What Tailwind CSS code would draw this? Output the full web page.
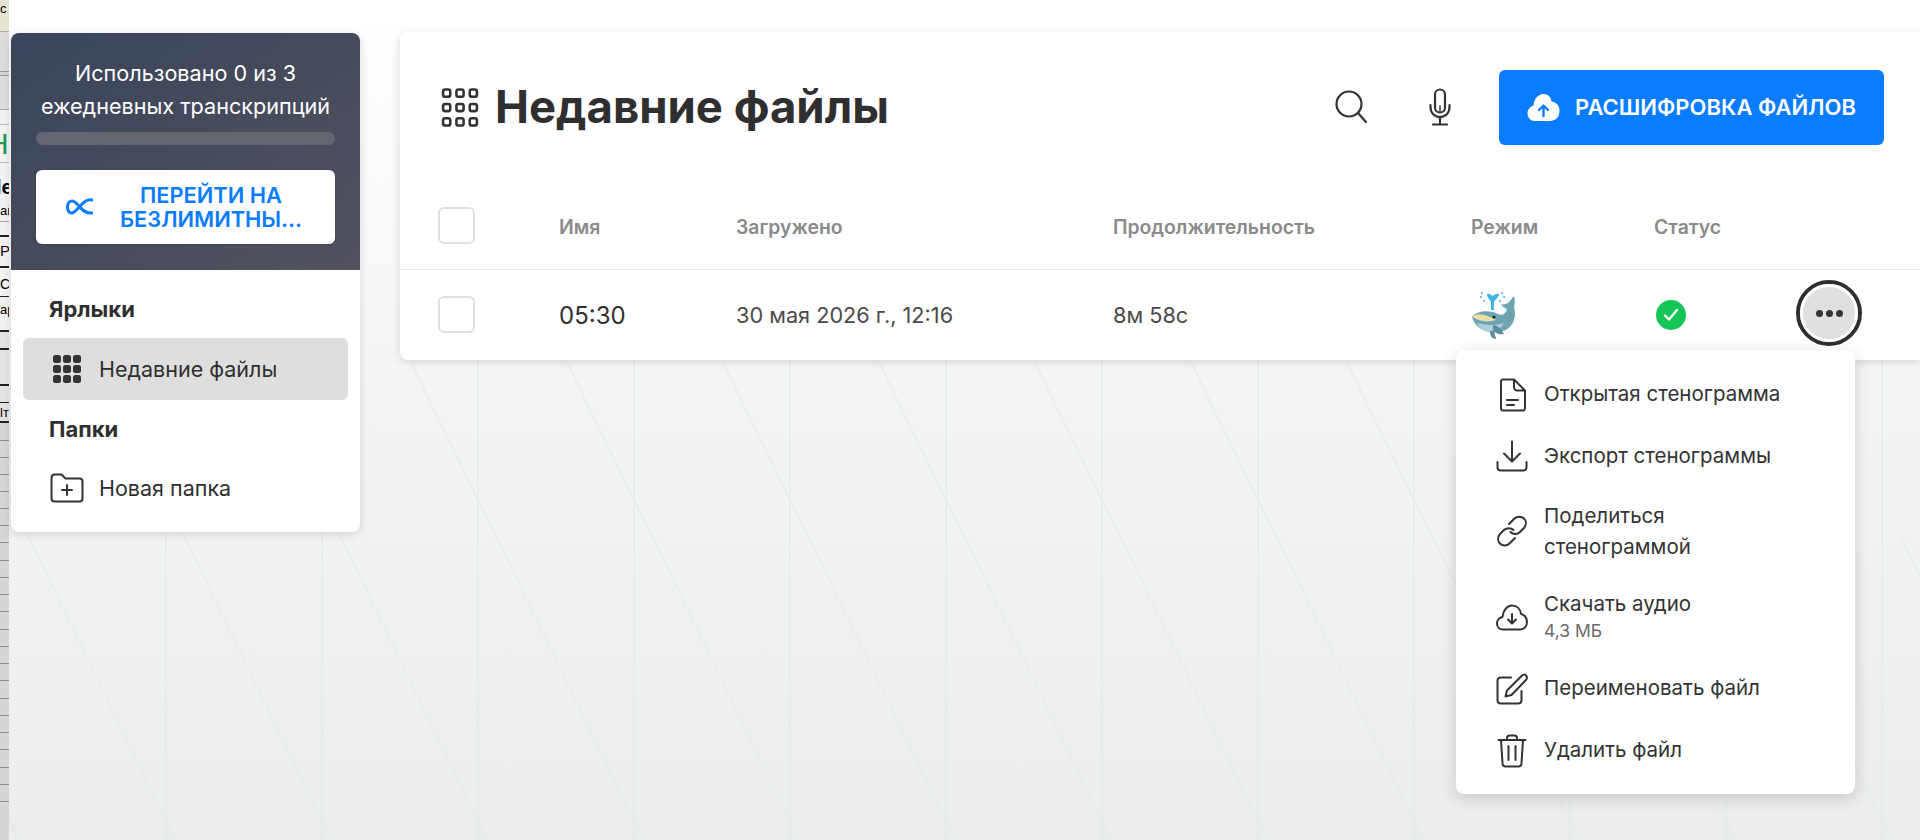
<!DOCTYPE html>
<html lang="ru">
<head>
<meta charset="utf-8">
<title>Недавние файлы</title>
<script src="https://cdn.jsdelivr.net/npm/@tailwindcss/browser@4"></script>
</head>
<body class="w-[1920px] h-[840px] overflow-hidden font-['Inter',sans-serif] text-[#2f2f2f]">
<div class="relative flex w-[1920px] h-[840px] overflow-hidden bg-gradient-to-b from-white via-[#f3f4f4] via-50% to-[#ebecec]">

    <!-- faint background pattern -->
    <svg class="absolute inset-0" width="1920" height="840" fill="none">
        <g stroke="#dfe6ee" stroke-width="1">
            <path d="M166 300V840M322 300V840M478 300V840M634 300V840M790 300V840M946 300V840M1102 300V840M1258 300V840M1414 300V840M1570 300V840M1726 300V840M1882 300V840"/>
        </g>
        <g stroke="#e3e8eb" stroke-width="1">
            <path d="M-126 540L24 850M30 540L180 850M186 540L336 850M342 540L492 850M498 540L648 850M654 540L804 850M810 540L960 850M966 540L1116 850M1122 540L1272 850M1278 540L1428 850M1434 540L1584 850M1590 540L1740 850M1746 540L1896 850M1902 540L2052 850"/>
            <path d="M30 540L-30 420M186 540L100 365M342 540L256 365M498 540L412 365M654 540L568 365M810 540L724 365M966 540L880 365M1122 540L1036 365M1278 540L1192 365M1434 540L1348 365"/>
        </g>
    </svg>

    <!-- other window peeking in on the left edge -->
    <div class="relative flex flex-col w-[9px] shrink-0 overflow-hidden bg-[#d6d6d6] text-black font-['Liberation_Sans',sans-serif]">
        <div class="h-[32px] shrink-0 bg-[#e6e3d2] border-b border-[#aaa] text-[13px] leading-[18px] -tracking-[1px]">c</div>
        <div class="h-[40px] shrink-0 bg-[#dcdcdc] border-b border-[#999]"></div>
        <div class="h-[4px] shrink-0 border-b border-[#999]"></div>
        <div class="h-[34px] shrink-0 bg-[#dcdcdc] border-b border-[#aaa]"></div>
        <div class="h-[15px] shrink-0 bg-[#f2f2f2] border-b border-[#bbb]"></div>
        <div class="h-[38px] shrink-0 bg-[#f2f2f2] border-b border-[#bbb] text-[#1d9a4e] text-[30px] leading-[38px] -ml-[13px]">H</div>
        <div class="h-[37px] shrink-0 bg-[#f2f2f2] text-[20px] font-bold leading-[48px] -ml-[4px]">le</div>
        <div class="h-[22px] shrink-0 bg-[#f2f2f2] border-b border-[#aaa] text-[13px] leading-[22px]">ай</div>
        <div class="h-[15px] shrink-0 bg-[#f2f2f2] border-b-2 border-[#222]"></div>
        <div class="h-[31px] shrink-0 bg-[#f2f2f2] border-b-2 border-[#222] text-[15px] leading-[28px]">Рр</div>
        <div class="h-[29px] shrink-0 bg-[#f2f2f2] border-b border-[#222] text-[14px] leading-[32px]">Со</div>
        <div class="h-[35px] shrink-0 bg-[#f2f2f2] border-b-2 border-[#222] text-[13px] leading-[26px]">ар</div>
        <div class="h-[18px] shrink-0 bg-[#e4e4e4] border-b-2 border-[#222]"></div>
        <div class="h-[36px] shrink-0 bg-[#e4e4e4] border-b-2 border-[#222]"></div>
        <div class="h-[17px] shrink-0 bg-[#e4e4e4] border-b border-[#222]"></div>
        <div class="h-[20px] shrink-0 bg-[#e4e4e4] border-b-2 border-[#222] text-[13px] leading-[20px]">lт</div>
        <div class="h-[18px] shrink-0 border-b border-[#8f8f8f]"></div>
        <div class="h-[17px] shrink-0 border-b border-[#8f8f8f]"></div>
        <div class="h-[17px] shrink-0 border-b border-[#8f8f8f]"></div>
        <div class="h-[17px] shrink-0 border-b border-[#8f8f8f]"></div>
        <div class="h-[17px] shrink-0 border-b border-[#8f8f8f]"></div>
        <div class="h-[17px] shrink-0 border-b border-[#8f8f8f]"></div>
        <div class="h-[17px] shrink-0 border-b border-[#8f8f8f]"></div>
        <div class="h-[18px] shrink-0 border-b border-[#8f8f8f]"></div>
        <div class="h-[17px] shrink-0 border-b border-[#8f8f8f]"></div>
        <div class="h-[17px] shrink-0 border-b border-[#8f8f8f]"></div>
        <div class="h-[17px] shrink-0 border-b border-[#8f8f8f]"></div>
        <div class="h-[18px] shrink-0 border-b border-[#8f8f8f]"></div>
        <div class="h-[17px] shrink-0 border-b border-[#8f8f8f]"></div>
        <div class="h-[17px] shrink-0 border-b border-[#8f8f8f]"></div>
        <div class="h-[17px] shrink-0 border-b border-[#8f8f8f]"></div>
        <div class="h-[18px] shrink-0 border-b border-[#8f8f8f]"></div>
        <div class="h-[17px] shrink-0 border-b border-[#8f8f8f]"></div>
        <div class="h-[17px] shrink-0 border-b border-[#8f8f8f]"></div>
        <div class="h-[17px] shrink-0 border-b border-[#8f8f8f]"></div>
        <div class="h-[18px] shrink-0 border-b border-[#8f8f8f]"></div>
        <div class="h-[17px] shrink-0 border-b border-[#8f8f8f]"></div>
        <div class="h-[17px] shrink-0 border-b border-[#8f8f8f]"></div>
    </div>

    <!-- sidebar -->
    <aside class="relative w-[349px] h-[499px] mt-[33px] ml-[2px] shrink-0 bg-white rounded-lg shadow-[0_2px_10px_rgba(0,0,0,0.14)] overflow-hidden">
        <div class="h-[237px] px-[25px] pt-[24px] bg-gradient-to-br from-[#39445a] to-[#52525e] text-white">
            <p class="text-center text-[21.600px] leading-[33px]">Использовано 0 из 3 ежедневных транскрипций</p>
            <div class="h-[13px] mt-[9px] rounded-full bg-[#63666f]"></div>
            <button class="flex items-center w-full h-[74px] mt-[25px] pl-[30px] pr-[6px] rounded-md bg-white text-[#0a7cff] shadow-sm">
                <svg class="shrink-0" width="27" height="18" viewBox="0 0 27 18" fill="none" stroke="currentColor" stroke-width="3" stroke-linecap="round"><path d="M26 2C21 1 18 4 14 8 10 13 7 15.500 5 15 2 14 1.500 11 1.500 9 1.500 6 3 3 6 3 9 3 11 6 14 9 17 13 20 15.500 26 15"/></svg>
                <span class="flex-1 text-center text-[21.800px] leading-[24px] font-semibold">ПЕРЕЙТИ НА<br>БЕЗЛИМИТНЫ...</span>
            </button>
        </div>
        <div class="px-[12px]">
            <h3 class="h-[68px] pl-[26px] pt-[24px] text-[22px] leading-[30px] font-bold">Ярлыки</h3>
            <a class="flex items-center h-[62px] pl-[30px] gap-[18px] rounded-md bg-[#dedede] text-[21.500px]">
                <svg width="28" height="28" viewBox="0 0 28 28" fill="#333"><rect x="0" y="0" width="8" height="8" rx="2.500"/><rect x="10" y="0" width="8" height="8" rx="2.500"/><rect x="20" y="0" width="8" height="8" rx="2.500"/><rect x="0" y="10" width="8" height="8" rx="2.500"/><rect x="10" y="10" width="8" height="8" rx="2.500"/><rect x="20" y="10" width="8" height="8" rx="2.500"/><rect x="0" y="20" width="8" height="8" rx="2.500"/><rect x="10" y="20" width="8" height="8" rx="2.500"/><rect x="20" y="20" width="8" height="8" rx="2.500"/></svg>
                <span>Недавние файлы</span>
            </a>
            <h3 class="h-[58px] pl-[26px] pt-[14px] text-[22px] leading-[30px] font-bold">Папки</h3>
            <a class="flex items-center h-[60px] pl-[27px] gap-[15px] text-[21.500px]">
                <svg width="34" height="30" viewBox="0 0 34 30" fill="none" stroke="#333" stroke-width="2" stroke-linecap="round" stroke-linejoin="round"><path d="M1.500 5C1.500 3 2.500 1.500 4.500 1.500H11.500L15.500 5.500H29.500C31.500 5.500 32.500 6.500 32.500 8.500V25.500C32.500 27.500 31.500 28.500 29.500 28.500H4.500C2.500 28.500 1.500 27.500 1.500 25.500Z"/><path d="M17 12V22M12 17H22"/></svg>
                <span>Новая папка</span>
            </a>
        </div>
    </aside>

    <!-- main card -->
    <main class="relative w-[1520px] h-[328px] mt-[32px] ml-[40px] shrink-0 bg-white rounded-l-lg shadow-[0_2px_10px_rgba(0,0,0,0.14)]">
        <header class="flex items-center h-[134px] pt-[16px] pl-[41px] pr-[36px]">
            <svg class="shrink-0" width="38" height="39" viewBox="0 0 36 38" fill="none" stroke="#333" stroke-width="2.500"><rect x="1.500" y="1.500" width="7" height="7" rx="2"/><rect x="14.500" y="1.500" width="7" height="7" rx="2"/><rect x="27.500" y="1.500" width="7" height="7" rx="2"/><rect x="1.500" y="15.500" width="7" height="7" rx="2"/><rect x="14.500" y="15.500" width="7" height="7" rx="2"/><rect x="27.500" y="15.500" width="7" height="7" rx="2"/><rect x="1.500" y="29.500" width="7" height="7" rx="2"/><rect x="14.500" y="29.500" width="7" height="7" rx="2"/><rect x="27.500" y="29.500" width="7" height="7" rx="2"/></svg>
            <h1 class="ml-[16px] text-[45.500px] font-bold leading-none">Недавние файлы</h1>
            <svg class="ml-auto" width="32" height="34" viewBox="0 0 32 34" fill="none" stroke="#333" stroke-width="2.200" stroke-linecap="round"><circle cx="14" cy="14" r="12.500"/><path d="M23 23L31 32"/></svg>
            <svg class="ml-[62px]" width="22" height="38" viewBox="0 0 22 38" fill="none" stroke="#333" stroke-width="2.200" stroke-linecap="round"><rect x="6" y="1.500" width="10" height="23" rx="5"/><path d="M1.500 17V19C1.500 25 5.500 29 11 29S20.500 25 20.500 19V17M11 29V36M4 36.500H18"/><path d="M11 18V23" stroke-width="1.500"/></svg>
            <button class="flex items-center justify-center w-[385px] h-[75px] ml-[48px] gap-[15px] rounded-md bg-[#0a7cff] text-white text-[22px] font-semibold">
                <svg width="33" height="29" viewBox="0 0 33 29"><path fill="#fff" d="M16.500 1C21 1 24 4 24.500 8.500 29 9 32.500 12.500 32.500 17.500 32.500 24 28.500 28 23 28H8C3.500 28 .5 24.500.5 20.500.5 16.500 3 13.500 6.500 12.500 7 6 11 1 16.500 1Z"/><path fill="none" stroke="#0a7cff" stroke-width="2.400" stroke-linecap="round" stroke-linejoin="round" d="M16.500 23V13M12 17L16.500 12.500 21 17"/></svg>
                <span>РАСШИФРОВКА ФАЙЛОВ</span>
            </button>
        </header>

        <div class="relative flex items-center h-[104px] border-b border-[#e9e9e9] text-[19.400px] leading-[24px] font-semibold text-[#8a8a8a]">
            <span class="absolute left-[38px] top-[41px] w-[37px] h-[37px] rounded-md border-2 border-[#dfdfdf] bg-white"></span>
            <span class="absolute left-[159px] top-[49px]">Имя</span>
            <span class="absolute left-[336px] top-[49px]">Загружено</span>
            <span class="absolute left-[713px] top-[49px]">Продолжительность</span>
            <span class="absolute left-[1071px] top-[49px]">Режим</span>
            <span class="absolute left-[1254px] top-[49px]">Статус</span>
        </div>

        <div class="relative h-[90px]">
            <span class="absolute left-[38px] top-[26px] w-[37px] h-[37px] rounded-md border-2 border-[#dfdfdf] bg-white"></span>
            <span class="absolute left-[159px] top-[30px] text-[24px] leading-[32px]">05:30</span>
            <span class="absolute left-[336px] top-[30px] text-[21.700px] leading-[30px] text-[#4a4a4a]">30 мая 2026 г., 12:16</span>
            <span class="absolute left-[713px] top-[30px] text-[21.700px] leading-[30px] text-[#4a4a4a]">8м 58с</span>

            <!-- whale emoji -->
            <svg class="absolute left-[1071px] top-[20px]" width="48" height="50" viewBox="0 0 48 50">
                <path fill="#3fb4e6" d="M16 4C18 3 20 5 21.500 6 23 5 26 3 28 4 28 8 24 9 23 12V20H20V12C19 9 16 8 16 4Z"/>
                <g fill="#3fb4e6"><circle cx="11" cy="3" r="1"/><circle cx="10" cy="7" r="1"/><circle cx="13" cy="11" r="1"/><circle cx="31" cy="3" r="1"/><circle cx="33" cy="7" r="1"/><circle cx="29" cy="11" r="1"/></g>
                <path fill="#6ea3b2" d="M1 26C8 20 20 20 27 24 31 26 35 24 36 19 33 18 31 16 30 14 33 15 36 14 38 12 40 10 41 8 43 6 44 10 44 14 43 17 46 28 42 40 28 42 14 44 3 37 1 26Z"/>
                <path fill="#eadfa8" d="M1 26C8 23 17 25 25 30 16 33 6 31 1 26Z"/>
                <path fill="#a8cfda" d="M6 33C14 35 24 36 33 33 30 39 24 42 18 42 12 41 8 38 6 33Z"/>
                <path fill="#5a8c9b" d="M22 35C25 35 30 38 33 44 28 45 24 43 22 40ZM19 41H23L25 49C22 49 19 47 19 41Z"/>
                <circle cx="23" cy="27" r="1.500" fill="#222"/>
            </svg>

            <span class="absolute left-[1256px] top-[30px] flex items-center justify-center w-[30px] h-[30px] rounded-full bg-[#14c658]">
                <svg width="16" height="14" viewBox="0 0 16 14" fill="none" stroke="#fff" stroke-width="2.400" stroke-linecap="round" stroke-linejoin="round"><path d="M2 7.500L6 11.500L14 2"/></svg>
            </span>

            <button class="absolute left-[1396px] top-[10px] flex items-center justify-center gap-[3px] w-[66px] h-[66px] rounded-full bg-[#e0e0e0] border-[4px] border-[#2f2f2f] outline-[3px] outline-white -outline-offset-[7px]">
                <i class="w-[7px] h-[7px] rounded-full bg-[#333]"></i><i class="w-[7px] h-[7px] rounded-full bg-[#333]"></i><i class="w-[7px] h-[7px] rounded-full bg-[#333]"></i>
            </button>
        </div>

        <!-- dropdown -->
        <div class="absolute left-[1056px] top-[318px] w-[399px] h-[444px] pt-[13px] bg-white rounded-lg shadow-[0_4px_16px_rgba(0,0,0,0.16)] text-[20.500px] text-[#333] z-10">
            <a class="flex items-center h-[63px] pl-[40px] gap-[16px]">
                <svg class="w-[32px] shrink-0" width="32" height="34" viewBox="0 0 32 34" fill="none" stroke="#333" stroke-width="2" stroke-linecap="round" stroke-linejoin="round"><path d="M5 3.500C5 2 6 1.500 7 1.500H18L29 12.500V30C29 31.500 28 32.500 27 32.500H7C6 32.500 5 31.500 5 30ZM18 1.500V9C18 11 19.500 12.500 21 12.500H29M11 22H22M11 27H18"/></svg>
                <span>Открытая стенограмма</span>
            </a>
            <a class="flex items-center h-[60px] pl-[40px] gap-[16px]">
                <svg class="w-[32px] shrink-0" width="32" height="32" viewBox="0 0 32 32" fill="none" stroke="#333" stroke-width="2" stroke-linecap="round" stroke-linejoin="round"><path d="M16 1.500V21M8 13.500L16 21.500 24 13.500M1.500 22V27C1.500 29.500 3 30.500 5 30.500H27C29 30.500 30.500 29.500 30.500 27V22"/></svg>
                <span>Экспорт стенограммы</span>
            </a>
            <a class="flex items-center h-[90px] pl-[40px] gap-[16px]">
                <svg class="w-[32px] shrink-0" width="32" height="32" viewBox="0 0 32 32" fill="none" stroke="#333" stroke-width="2" stroke-linecap="round" stroke-linejoin="round"><path d="M13 9L18.500 3.500C21 1 25.500 1 28 3.500 30.500 6 30.500 10 28 13L24 17C21.500 19.500 17 19.500 14.500 17"/><path d="M19 23L13.500 28.500C11 31 6.500 31 4 28.500 1.500 26 1.500 22 4 19L8 15C10.500 12.500 15 12.500 17.500 15"/></svg>
                <span class="leading-[31.500px]">Поделиться<br>стенограммой</span>
            </a>
            <a class="flex items-center h-[74px] mt-[4px] pl-[40px] gap-[16px]">
                <svg class="w-[32px] shrink-0" width="32" height="27" viewBox="0 0 32 27" fill="none" stroke="#333" stroke-width="2" stroke-linecap="round" stroke-linejoin="round"><path d="M7 25.500C3.500 25.500 1 23 1 19.500 1 16 3.500 13.500 6.500 13 7 6.500 11 1.500 16 1.500 21 1.500 24.500 5 25 10 28.500 10.500 31 14 31 18 31 22.500 28 25.500 24.500 25.500Z"/><path d="M16 10V19M12 15.500L16 19.500 20 15.500"/></svg>
                <span class="flex flex-col">
                    <span class="leading-[28px]">Скачать аудио</span>
                    <span class="text-[17.500px] leading-[26px] text-[#6b6b6b]">4,3 МБ</span>
                </span>
            </a>
            <a class="flex items-center h-[69px] pl-[40px] gap-[16px]">
                <svg class="w-[32px] shrink-0" width="32" height="32" viewBox="0 0 32 32" fill="none" stroke="#333" stroke-width="2" stroke-linecap="round" stroke-linejoin="round"><path d="M15 4.500H5C3 4.500 1.500 6 1.500 8V27C1.500 29 3 30.500 5 30.500H22C24 30.500 25.500 29 25.500 27V18"/><path d="M11 17.500L25.500 3C27 1.500 29 1 30 2.500 31.500 4 31 6 29.500 7.500L15.500 22 9.500 23.500Z"/></svg>
                <span>Переименовать файл</span>
            </a>
            <a class="flex items-center h-[55px] pl-[40px] gap-[16px]">
                <svg class="w-[32px] shrink-0" width="32" height="34" viewBox="0 0 32 34" fill="none" stroke="#333" stroke-width="2" stroke-linecap="round" stroke-linejoin="round"><path d="M2.500 6H29.500M11 6V4C11 2.500 12 1.500 13.500 1.500H18.500C20 1.500 21 2.500 21 4V6M5 6L6.500 29C6.500 31.500 8 32.500 10 32.500H22C24 32.500 25.500 31.500 25.500 29L27 6M12.500 12V26M19.500 12V26"/></svg>
                <span>Удалить файл</span>
            </a>
        </div>
    </main>
</div>
</body>
</html>
